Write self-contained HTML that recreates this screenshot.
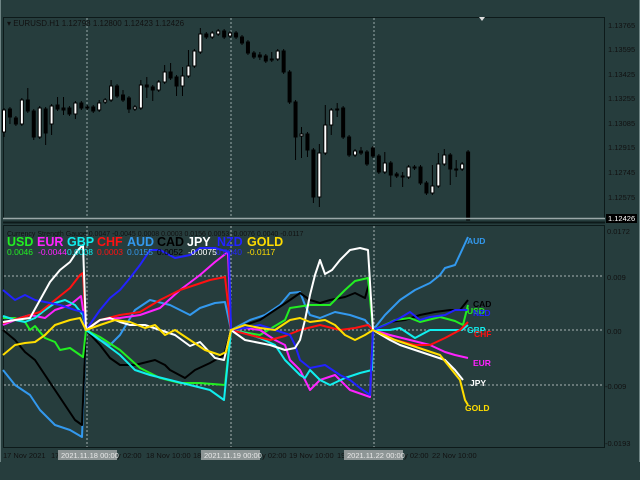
<!DOCTYPE html>
<html><head><meta charset="utf-8"><style>
html,body{margin:0;padding:0;background:#263d3d;width:640px;height:480px;overflow:hidden;font-family:"Liberation Sans",sans-serif}
svg{position:absolute;left:0;top:0}
</style></head><body>
<svg width="640" height="480" viewBox="0 0 640 480" xmlns="http://www.w3.org/2000/svg" font-family="Liberation Sans, sans-serif">
<rect width="640" height="480" fill="#263d3d"/>
<line x1="0.5" y1="0" x2="0.5" y2="462" stroke="#6f8585"/>
<line x1="639.5" y1="0" x2="639.5" y2="462" stroke="#6f8585"/>
<rect x="3.5" y="17.5" width="601" height="201" fill="none" stroke="#0d1a1a"/>
<line x1="87" y1="18" x2="87" y2="218" stroke="#9aa" stroke-dasharray="2,2"/>
<line x1="231" y1="18" x2="231" y2="218" stroke="#9aa" stroke-dasharray="2,2"/>
<line x1="374" y1="18" x2="374" y2="218" stroke="#9aa" stroke-dasharray="2,2"/>
<polygon points="479,17 485,17 482,21" fill="#ddd"/>
<text x="7" y="26" font-size="8" fill="#111">▾ EURUSD.H1  1.12798 1.12800 1.12423 1.12426</text>
<g id="candles"></g>
<line x1="3" y1="218.5" x2="605" y2="218.5" stroke="#9aa8a8" stroke-width="1.5"/>
<line x1="3" y1="222.5" x2="605" y2="222.5" stroke="#0d1a1a" stroke-width="2"/>
<g font-size="7.5" fill="#111">
<text x="608" y="28">1.13765</text><text x="608" y="52">1.13595</text><text x="608" y="77">1.13425</text>
<text x="608" y="101">1.13255</text><text x="608" y="126">1.13085</text><text x="608" y="150">1.12915</text>
<text x="608" y="175">1.12745</text><text x="608" y="200">1.12575</text>
</g>
<rect x="606" y="214" width="31" height="9" fill="#000"/>
<text x="608" y="221" font-size="7.5" fill="#fff">1.12426</text>
<rect x="3.5" y="225.5" width="601" height="222" fill="none" stroke="#0d1a1a"/>
<g stroke="#a8b4b4" stroke-dasharray="2,2">
<line x1="4" y1="276" x2="604" y2="276"/><line x1="4" y1="330" x2="604" y2="330"/><line x1="4" y1="385" x2="604" y2="385"/>
<line x1="87" y1="226" x2="87" y2="447"/><line x1="231" y1="226" x2="231" y2="447"/><line x1="374" y1="226" x2="374" y2="447"/>
</g>
<g font-size="7.5" fill="#111">
<text x="607" y="234">0.0172</text><text x="607" y="280">0.009</text><text x="607" y="334">0.00</text>
<text x="605" y="389">-0.009</text><text x="605" y="446">-0.0193</text>
</g>
<g fill="none" stroke-width="2" stroke-linejoin="round">
<polyline stroke="#3399ee" points="3,370 15,385 30,395 40,410 55,425 70,430 82,437 86,330 100,340 110,345 120,335 135,310 150,300 170,305 190,315 200,308 215,303 225,302 231,330 250,320 265,315 280,305 290,293 300,292 305,305 310,315 320,318 335,312 350,315 365,320 373,330 385,315 400,300 415,290 430,283 440,275 445,268 455,265 462,250 468,237"/>
<polyline stroke="#000" points="3,330 15,340 25,352 35,360 45,375 55,390 65,405 75,420 82,425 86,330 100,345 110,358 120,365 135,365 155,360 165,365 170,370 185,378 195,370 210,363 224,355 231,330 245,325 260,320 275,310 290,300 300,293 310,300 320,303 330,300 345,297 355,293 365,298 370,280 373,330 390,322 405,320 420,315 435,312 450,310 460,310 468,300"/>
<polyline stroke="#22ee22" points="3,318 15,318 25,322 30,330 35,326 45,338 55,342 60,350 70,348 83,357 86,330 100,337 120,350 140,368 160,378 180,383 200,383 225,385 231,330 260,335 285,320 290,308 310,305 330,305 345,290 355,281 368,278 373,330 395,320 410,318 420,322 440,317 455,321 463,325 468,305"/>
<polyline stroke="#ff22ff" points="3,325 20,318 30,315 45,318 55,310 70,305 81,296 86,330 100,320 120,318 140,315 160,308 180,290 200,275 215,262 228,252 231,330 245,328 260,330 275,340 285,345 290,360 300,370 310,390 320,380 335,375 350,390 370,397 373,330 390,335 410,340 430,345 445,352 455,355 468,358"/>
<polyline stroke="#11eeee" points="3,316 15,320 25,322 35,318 45,310 55,303 65,300 75,305 83,315 86,330 100,340 120,355 135,370 150,375 170,380 190,385 210,390 224,400 231,330 245,333 260,338 275,345 285,360 300,375 305,378 310,370 320,380 330,385 345,378 360,373 372,370 373,330 390,330 400,328 415,338 430,330 450,330 462,330 468,325"/>
<polyline stroke="#ff1111" points="3,323 20,318 40,312 55,300 70,288 80,275 83,273 86,330 100,320 120,315 140,312 160,300 180,290 195,285 210,280 225,277 231,330 250,335 270,340 285,336 300,330 320,325 340,330 355,328 368,325 373,330 395,340 415,345 430,345 445,338 460,330 468,322"/>
<polyline stroke="#2222ff" points="3,290 15,300 25,295 35,300 45,302 60,305 75,310 83,312 86,330 100,310 110,298 120,290 130,278 140,265 150,250 160,250 175,258 190,255 200,248 215,248 229,252 231,330 245,328 260,325 275,330 290,335 295,345 300,360 310,368 325,365 340,375 350,380 360,388 370,395 373,330 385,325 400,318 410,312 420,320 430,317 445,315 455,310 468,310"/>
<polyline stroke="#ffffff" points="3,322 15,320 30,318 40,300 50,282 60,270 70,262 78,250 83,245 86,330 100,320 110,318 120,322 130,325 145,325 160,330 175,335 190,346 200,342 215,358 224,360 231,330 245,340 270,345 285,350 295,348 300,340 305,320 310,295 315,275 320,260 325,274 332,270 340,260 350,250 360,248 368,250 373,330 390,340 400,345 415,350 430,355 445,360 455,370 463,380"/>
<polyline stroke="#ffdd00" points="3,355 15,345 25,343 35,342 45,335 55,325 70,320 80,318 86,330 100,325 115,320 130,322 145,328 155,325 165,335 175,330 190,340 205,350 220,355 226,352 231,330 245,325 260,328 275,330 290,320 300,318 310,322 325,320 335,325 345,335 355,340 365,335 373,330 395,340 410,345 425,350 440,355 452,370 460,380 465,400 468,405"/>
</g>
<g font-size="8.5" font-weight="bold">
<text x="467" y="244" fill="#3399ee">AUD</text><text x="473" y="307" fill="#000">CAD</text>
<text x="467" y="314" fill="#22ee22">USD</text><text x="473" y="316" fill="#2222ff">NZD</text>
<text x="467" y="333" fill="#11eeee">GBP</text><text x="474" y="337" fill="#ff1111">CHF</text>
<text x="473" y="366" fill="#ff22ff">EUR</text><text x="470" y="386" fill="#fff">JPY</text>
<text x="465" y="411" fill="#ffdd00">GOLD</text>
</g>
<text x="7" y="236" font-size="7" fill="#111">Currency Strength Gauge 0.0047 -0.0045 0.0008 0.0003 0.0156 0.0053 -0.0076 0.0040 -0.0117</text>
<g font-size="12.5" font-weight="bold">
<text x="7" y="246" fill="#22ee22">USD</text><text x="37" y="246" fill="#ff22ff">EUR</text>
<text x="67" y="246" fill="#11eeee">GBP</text><text x="97" y="246" fill="#ff1111">CHF</text>
<text x="127" y="246" fill="#3399ee">AUD</text><text x="157" y="246" fill="#000">CAD</text>
<text x="187" y="246" fill="#fff">JPY</text><text x="217" y="246" fill="#2222ff">NZD</text>
<text x="247" y="246" fill="#ffdd00">GOLD</text>
</g>
<g font-size="8.5">
<text x="7" y="255" fill="#22ee22">0.0046</text><text x="38" y="255" fill="#ff22ff">-0.0044</text>
<text x="67" y="255" fill="#11eeee">0.0008</text><text x="97" y="255" fill="#ff1111">0.0003</text>
<text x="127" y="255" fill="#3399ee">0.0155</text><text x="157" y="255" fill="#000">0.0052</text>
<text x="188" y="255" fill="#fff">-0.0075</text><text x="216" y="255" fill="#2222ff">0.0040</text>
<text x="247" y="255" fill="#ffdd00">-0.0117</text>
</g>
<g font-size="7.5" fill="#111">
<text x="3" y="458">17 Nov 2021</text><text x="51" y="458">17</text>
<text x="117" y="458">y 02:00</text><text x="146" y="458">18 Nov 10:00</text><text x="193" y="458">18</text>
<text x="262" y="458">y 02:00</text><text x="289" y="458">19 Nov 10:00</text><text x="337" y="458">19</text>
<text x="404" y="458">y 02:00</text><text x="432" y="458">22 Nov 10:00</text>
</g>
<rect x="58" y="450" width="59" height="10" fill="#8e9696"/><text x="61" y="458" font-size="7.5" fill="#e8e8e8">2021.11.18 00:00</text>
<rect x="201" y="450" width="59" height="10" fill="#8e9696"/><text x="204" y="458" font-size="7.5" fill="#e8e8e8">2021.11.19 00:00</text>
<rect x="344" y="450" width="59" height="10" fill="#8e9696"/><text x="347" y="458" font-size="7.5" fill="#e8e8e8">2021.11.22 00:00</text>
</svg>
<script>
var d=[[110,132,1,0,137],[109,117,0,0,124],[118,124,0],[100,124,1],[100,111,0,88,0],[111,137,0,0,140],[108,137,1],[109,133,0,0,145],[106,124,1,0,135],[105,109,0,97,0],
[108,110,0,97,115],[108,114,0],[103,114,1,0,119],[103,108,0],[107,108,0],[107,111,0],[103,110,1,100,0],[100,102,1],[86,100,1,80,0],[86,96,0],
[95,100,0,90,0],[98,109,0,0,113],[107,109,1],[85,108,1,80,0],[85,87,0,77,98],[87,90,0,0,101],[82,90,1],[72,82,1,65,0],[72,78,0,63,0],[77,86,0,0,96],
[76,86,1,67,96],[66,76,1,50,0],[51,66,1,49,0],[34,52,1,28,0],[34,37,0],[33,37,1],[31,34,1],[31,37,0],[33,36,1],[33,37,0],
[37,43,0],[42,53,0],[53,57,0],[55,57,0,52,60],[56,61,0],[59,60,0,52,0],[51,59,1],[51,72,0],[72,102,0],[102,137,0,0,160],
[134,136,1,127,158],[134,150,0,0,157],[150,197,0,0,203],[153,197,1,144,207],[125,153,1,105,0],[110,125,1,0,135],[109,110,0,103,117],[108,137,0],[137,155,0],[151,155,1],
[151,153,0,147,0],[152,164,0],[148,156,0],[156,172,0],[163,172,1,152,0],[163,175,0,0,187],[174,176,0],[176,177,0,172,187],[167,177,1],[167,168,0],
[167,183,0],[183,193,0],[186,193,1,165,0],[164,186,1,153,0],[155,164,1,149,0],[155,169,0,0,185],[169,170,0,160,177],[164,169,1],[152,220,0,150,220]];
var h='';
for(var i=0;i<d.length;i++){var x=4+i*5.95,c=d[i],t=c[0],b=c[1];if(b-t<1)b=t+1;
var wt=c[3]||t-2,wb=c[4]||b+2;
h+='<line x1="'+x+'" y1="'+wt+'" x2="'+x+'" y2="'+wb+'" stroke="#000"/>';
h+='<rect x="'+(x-1.5)+'" y="'+t+'" width="3" height="'+(b-t)+'" fill="'+(c[2]?'#fff':'#000')+'" stroke="#000"/>';}
document.getElementById('candles').innerHTML=h;
</script>
</body></html>
